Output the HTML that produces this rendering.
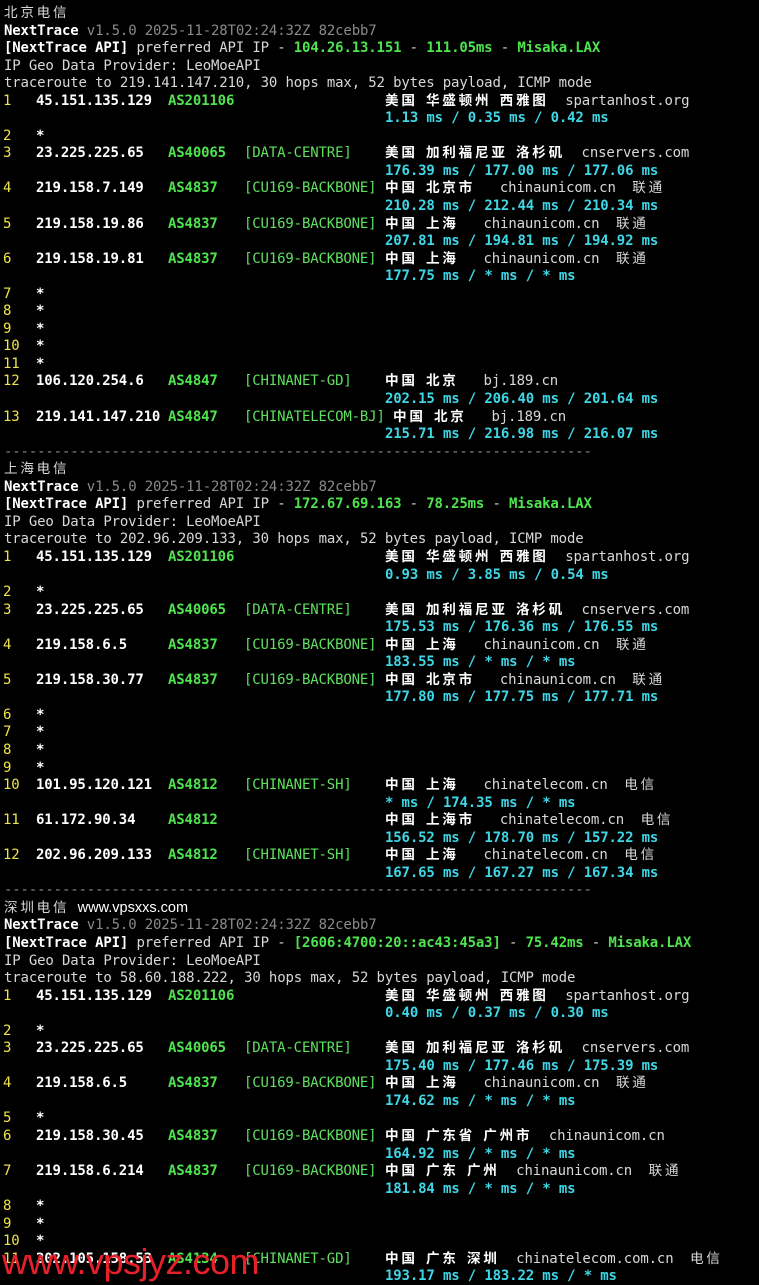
<!DOCTYPE html>
<html><head><meta charset="utf-8"><style>
html,body{margin:0;padding:0;background:#000;width:759px;height:1280px;overflow:hidden}
body{font-family:"DejaVu Sans Mono","Liberation Mono","Noto Sans CJK SC",monospace;font-size:14px;letter-spacing:-0.15px;color:#d8d8d8;padding-top:5px;position:relative}
.r{height:17.55px;line-height:17.55px;position:relative;white-space:pre;overflow:visible}
.r>span{position:absolute;top:0;white-space:pre;line-height:17.55px}
.t{left:4px}
.n{left:3px;color:#f0e44a}
.ip{left:36px;color:#fff;font-weight:bold}
.as{left:168px;color:#4ee44e;font-weight:bold}
.tg{left:244px;color:#5fe05f}
.g{left:385px;color:#d8d8d8}
.m{left:385px;color:#3fd6e6;font-weight:bold}
.c,.h{font-family:"Noto Sans CJK SC","WenQuanYi Zen Hei",sans-serif;letter-spacing:2.75px;display:inline-block;line-height:17.55px;height:17.55px;vertical-align:top;font-size:13.6px;position:relative;top:-2px}
.c{font-weight:bold;color:#fff}
.h{color:#d8d8d8}
.w{font-weight:bold;color:#fff}
.gr{color:#8a8a8a}
.gn{color:#4ee44e;font-weight:bold}
.d{color:#888}
.wm{position:absolute;left:2px;top:1241px;font-family:"Liberation Sans",sans-serif;font-size:36px;color:#e8202a;letter-spacing:-0.5px}
</style></head><body>
<div class="r"><span class="t"><span class="h">北京电信</span></span></div>
<div class="r"><span class="t"><span class="w">NextTrace</span> <span class="gr">v1.5.0 2025-11-28T02:24:32Z 82cebb7</span></span></div>
<div class="r"><span class="t"><span class="w">[NextTrace API]</span> preferred API IP - <span class="gn">104.26.13.151</span> - <span class="gn">111.05ms</span> - <span class="gn">Misaka.LAX</span></span></div>
<div class="r"><span class="t">IP Geo Data Provider: LeoMoeAPI</span></div>
<div class="r"><span class="t">traceroute to 219.141.147.210, 30 hops max, 52 bytes payload, ICMP mode</span></div>
<div class="r"><span class="n">1</span><span class="ip">45.151.135.129</span><span class="as">AS201106</span><span class="g"><span class="c">美国</span> <span class="c">华盛顿州</span> <span class="c">西雅图</span>  spartanhost.org</span></div>
<div class="r"><span class="m">1.13 ms / 0.35 ms / 0.42 ms</span></div>
<div class="r"><span class="n">2</span><span class="ip">*</span></div>
<div class="r"><span class="n">3</span><span class="ip">23.225.225.65</span><span class="as">AS40065</span><span class="tg">[DATA-CENTRE]</span><span class="g"><span class="c">美国</span> <span class="c">加利福尼亚</span> <span class="c">洛杉矶</span>  cnservers.com</span></div>
<div class="r"><span class="m">176.39 ms / 177.00 ms / 177.06 ms</span></div>
<div class="r"><span class="n">4</span><span class="ip">219.158.7.149</span><span class="as">AS4837</span><span class="tg">[CU169-BACKBONE]</span><span class="g"><span class="c">中国</span> <span class="c">北京市</span>   chinaunicom.cn  <span class="h">联通</span></span></div>
<div class="r"><span class="m">210.28 ms / 212.44 ms / 210.34 ms</span></div>
<div class="r"><span class="n">5</span><span class="ip">219.158.19.86</span><span class="as">AS4837</span><span class="tg">[CU169-BACKBONE]</span><span class="g"><span class="c">中国</span> <span class="c">上海</span>   chinaunicom.cn  <span class="h">联通</span></span></div>
<div class="r"><span class="m">207.81 ms / 194.81 ms / 194.92 ms</span></div>
<div class="r"><span class="n">6</span><span class="ip">219.158.19.81</span><span class="as">AS4837</span><span class="tg">[CU169-BACKBONE]</span><span class="g"><span class="c">中国</span> <span class="c">上海</span>   chinaunicom.cn  <span class="h">联通</span></span></div>
<div class="r"><span class="m">177.75 ms / * ms / * ms</span></div>
<div class="r"><span class="n">7</span><span class="ip">*</span></div>
<div class="r"><span class="n">8</span><span class="ip">*</span></div>
<div class="r"><span class="n">9</span><span class="ip">*</span></div>
<div class="r"><span class="n">10</span><span class="ip">*</span></div>
<div class="r"><span class="n">11</span><span class="ip">*</span></div>
<div class="r"><span class="n">12</span><span class="ip">106.120.254.6</span><span class="as">AS4847</span><span class="tg">[CHINANET-GD]</span><span class="g"><span class="c">中国</span> <span class="c">北京</span>   bj.189.cn</span></div>
<div class="r"><span class="m">202.15 ms / 206.40 ms / 201.64 ms</span></div>
<div class="r"><span class="n">13</span><span class="ip">219.141.147.210</span><span class="as">AS4847</span><span class="tg">[CHINATELECOM-BJ]</span><span class="g" style="left:393px"><span class="c">中国</span> <span class="c">北京</span>   bj.189.cn</span></div>
<div class="r"><span class="m">215.71 ms / 216.98 ms / 216.07 ms</span></div>
<div class="r"><span class="t d">-----------------------------------------------------------------------</span></div>
<div class="r"><span class="t"><span class="h">上海电信</span></span></div>
<div class="r"><span class="t"><span class="w">NextTrace</span> <span class="gr">v1.5.0 2025-11-28T02:24:32Z 82cebb7</span></span></div>
<div class="r"><span class="t"><span class="w">[NextTrace API]</span> preferred API IP - <span class="gn">172.67.69.163</span> - <span class="gn">78.25ms</span> - <span class="gn">Misaka.LAX</span></span></div>
<div class="r"><span class="t">IP Geo Data Provider: LeoMoeAPI</span></div>
<div class="r"><span class="t">traceroute to 202.96.209.133, 30 hops max, 52 bytes payload, ICMP mode</span></div>
<div class="r"><span class="n">1</span><span class="ip">45.151.135.129</span><span class="as">AS201106</span><span class="g"><span class="c">美国</span> <span class="c">华盛顿州</span> <span class="c">西雅图</span>  spartanhost.org</span></div>
<div class="r"><span class="m">0.93 ms / 3.85 ms / 0.54 ms</span></div>
<div class="r"><span class="n">2</span><span class="ip">*</span></div>
<div class="r"><span class="n">3</span><span class="ip">23.225.225.65</span><span class="as">AS40065</span><span class="tg">[DATA-CENTRE]</span><span class="g"><span class="c">美国</span> <span class="c">加利福尼亚</span> <span class="c">洛杉矶</span>  cnservers.com</span></div>
<div class="r"><span class="m">175.53 ms / 176.36 ms / 176.55 ms</span></div>
<div class="r"><span class="n">4</span><span class="ip">219.158.6.5</span><span class="as">AS4837</span><span class="tg">[CU169-BACKBONE]</span><span class="g"><span class="c">中国</span> <span class="c">上海</span>   chinaunicom.cn  <span class="h">联通</span></span></div>
<div class="r"><span class="m">183.55 ms / * ms / * ms</span></div>
<div class="r"><span class="n">5</span><span class="ip">219.158.30.77</span><span class="as">AS4837</span><span class="tg">[CU169-BACKBONE]</span><span class="g"><span class="c">中国</span> <span class="c">北京市</span>   chinaunicom.cn  <span class="h">联通</span></span></div>
<div class="r"><span class="m">177.80 ms / 177.75 ms / 177.71 ms</span></div>
<div class="r"><span class="n">6</span><span class="ip">*</span></div>
<div class="r"><span class="n">7</span><span class="ip">*</span></div>
<div class="r"><span class="n">8</span><span class="ip">*</span></div>
<div class="r"><span class="n">9</span><span class="ip">*</span></div>
<div class="r"><span class="n">10</span><span class="ip">101.95.120.121</span><span class="as">AS4812</span><span class="tg">[CHINANET-SH]</span><span class="g"><span class="c">中国</span> <span class="c">上海</span>   chinatelecom.cn  <span class="h">电信</span></span></div>
<div class="r"><span class="m">* ms / 174.35 ms / * ms</span></div>
<div class="r"><span class="n">11</span><span class="ip">61.172.90.34</span><span class="as">AS4812</span><span class="g"><span class="c">中国</span> <span class="c">上海市</span>   chinatelecom.cn  <span class="h">电信</span></span></div>
<div class="r"><span class="m">156.52 ms / 178.70 ms / 157.22 ms</span></div>
<div class="r"><span class="n">12</span><span class="ip">202.96.209.133</span><span class="as">AS4812</span><span class="tg">[CHINANET-SH]</span><span class="g"><span class="c">中国</span> <span class="c">上海</span>   chinatelecom.cn  <span class="h">电信</span></span></div>
<div class="r"><span class="m">167.65 ms / 167.27 ms / 167.34 ms</span></div>
<div class="r"><span class="t d">-----------------------------------------------------------------------</span></div>
<div class="r"><span class="t"><span class="h">深圳电信</span> <span style="font-family:'Liberation Sans',sans-serif;font-size:14.5px;color:#fff;letter-spacing:0">www.vpsxxs.com</span></span></div>
<div class="r"><span class="t"><span class="w">NextTrace</span> <span class="gr">v1.5.0 2025-11-28T02:24:32Z 82cebb7</span></span></div>
<div class="r"><span class="t"><span class="w">[NextTrace API]</span> preferred API IP - <span class="gn">[2606:4700:20::ac43:45a3]</span> - <span class="gn">75.42ms</span> - <span class="gn">Misaka.LAX</span></span></div>
<div class="r"><span class="t">IP Geo Data Provider: LeoMoeAPI</span></div>
<div class="r"><span class="t">traceroute to 58.60.188.222, 30 hops max, 52 bytes payload, ICMP mode</span></div>
<div class="r"><span class="n">1</span><span class="ip">45.151.135.129</span><span class="as">AS201106</span><span class="g"><span class="c">美国</span> <span class="c">华盛顿州</span> <span class="c">西雅图</span>  spartanhost.org</span></div>
<div class="r"><span class="m">0.40 ms / 0.37 ms / 0.30 ms</span></div>
<div class="r"><span class="n">2</span><span class="ip">*</span></div>
<div class="r"><span class="n">3</span><span class="ip">23.225.225.65</span><span class="as">AS40065</span><span class="tg">[DATA-CENTRE]</span><span class="g"><span class="c">美国</span> <span class="c">加利福尼亚</span> <span class="c">洛杉矶</span>  cnservers.com</span></div>
<div class="r"><span class="m">175.40 ms / 177.46 ms / 175.39 ms</span></div>
<div class="r"><span class="n">4</span><span class="ip">219.158.6.5</span><span class="as">AS4837</span><span class="tg">[CU169-BACKBONE]</span><span class="g"><span class="c">中国</span> <span class="c">上海</span>   chinaunicom.cn  <span class="h">联通</span></span></div>
<div class="r"><span class="m">174.62 ms / * ms / * ms</span></div>
<div class="r"><span class="n">5</span><span class="ip">*</span></div>
<div class="r"><span class="n">6</span><span class="ip">219.158.30.45</span><span class="as">AS4837</span><span class="tg">[CU169-BACKBONE]</span><span class="g"><span class="c">中国</span> <span class="c">广东省</span> <span class="c">广州市</span>  chinaunicom.cn</span></div>
<div class="r"><span class="m">164.92 ms / * ms / * ms</span></div>
<div class="r"><span class="n">7</span><span class="ip">219.158.6.214</span><span class="as">AS4837</span><span class="tg">[CU169-BACKBONE]</span><span class="g"><span class="c">中国</span> <span class="c">广东</span> <span class="c">广州</span>  chinaunicom.cn  <span class="h">联通</span></span></div>
<div class="r"><span class="m">181.84 ms / * ms / * ms</span></div>
<div class="r"><span class="n">8</span><span class="ip">*</span></div>
<div class="r"><span class="n">9</span><span class="ip">*</span></div>
<div class="r"><span class="n">10</span><span class="ip">*</span></div>
<div class="r"><span class="n">11</span><span class="ip">202.105.158.53</span><span class="as">AS4134</span><span class="tg">[CHINANET-GD]</span><span class="g"><span class="c">中国</span> <span class="c">广东</span> <span class="c">深圳</span>  chinatelecom.com.cn  <span class="h">电信</span></span></div>
<div class="r"><span class="m">193.17 ms / 183.22 ms / * ms</span></div>
<div class="wm">www.vpsjyz.com</div>
</body></html>
